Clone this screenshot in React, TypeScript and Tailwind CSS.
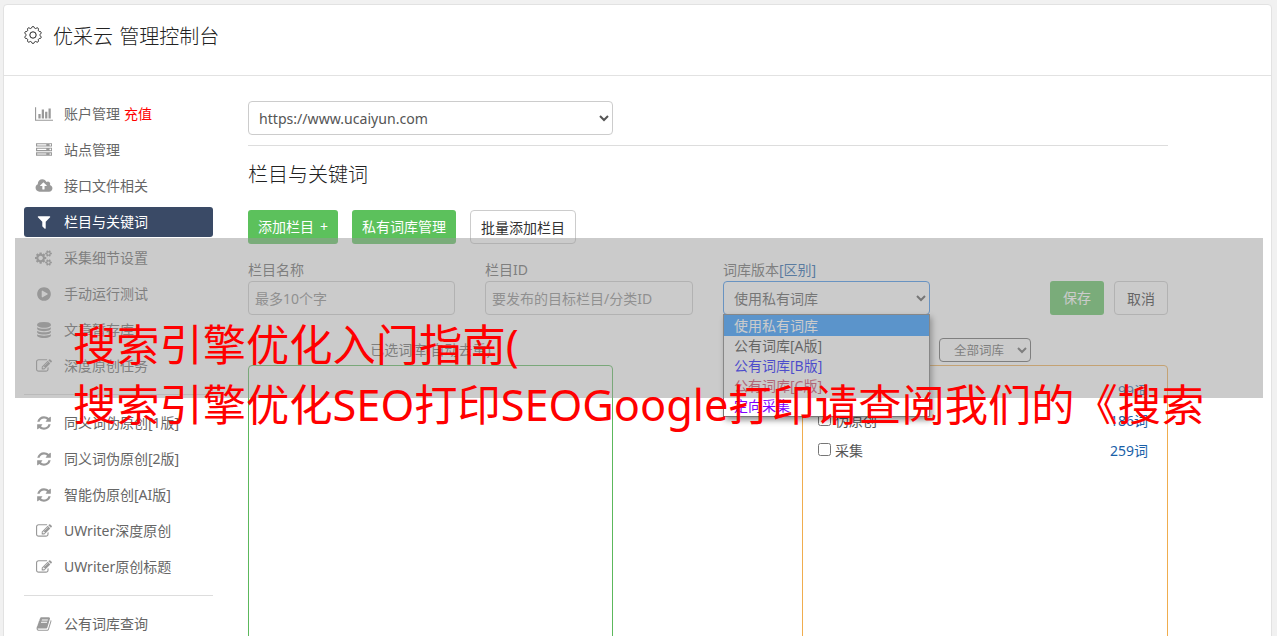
import React from "react";

type IconProps = { d: string; w?: number };

const Icon = ({ d, w = 1792 }: IconProps) => (
  <svg
    viewBox={`0 0 ${w} 1792`}
    className={w > 1792 ? "h-[16px] w-[18px]" : "h-[16px] w-[16px]"}
    fill="currentColor"
  >
    <path d={d} />
  </svg>
);

// outline of a round gear with soft teeth
const gearPoints = Array.from({ length: 120 }, (_, i) => {
  const a = (i / 120) * Math.PI * 2;
  const wave = Math.cos(a * 10);
  const r = 7.7 + 0.8 * Math.sign(wave) * Math.pow(Math.abs(wave), 0.5);
  return `${(9 + r * Math.sin(a)).toFixed(2)},${(9 - r * Math.cos(a)).toFixed(2)}`;
}).join(" ");

const GearIcon = () => (
  <svg
    viewBox="0 0 18 18"
    className="h-[18px] w-[18px]"
    fill="none"
    stroke="currentColor"
    strokeWidth="1"
    strokeLinejoin="round"
  >
    <polygon points={gearPoints} />
    <circle cx="9" cy="9" r="3.2" />
  </svg>
);

const smallCog =
  "v140q0 16-149 31-12 27-30 52 51 113 51 138 0 4-4 7-122 71-124 71-8 0-46-47t-52-68q-20 2-30 2t-30-2q-14 21-52 68t-46 47q-2 0-124-71-4-3-4-7 0-25 51-138-18-25-30-52-149-15-149-31v-140q0-16 149-31 13-29 30-52-51-113-51-138 0-4 4-7 4-2 35-20t59-34 30-16q8 0 46 46.5t52 67.5q20-2 30-2t30 2q51-71 92-112l6-2q4 0 124 70 4 3 4 7 0 25-51 138 17 23 30 52 149 15 149 31z";
const dot = "q0-40-28-68t-68-28-68 28-28 68 28 68 68 28 68-28 28-68z";
const disc =
  "q237 0 443-43t325-127v170q0 69-103 128t-280 93.5-385 34.5-385-34.5-280-93.5-103-128v-170q119 84 325 127t443 43z";

const icons = {
  chart: {
    w: 2048,
    d: "M640 896v512h-256v-512h256zm384-512v1024h-256v-1024h256zm1024 1152v128h-2048v-1536h128v1408h1920zm-640-896v768h-256v-768h256zm384-384v1152h-256v-1152h256z",
  },
  server: {
    d: `M128 1408h1024v-128h-1024v128zM128 896h1024v-128h-1024v128zM1696 1344${dot}M128 384h1024v-128h-1024v128zM1696 832${dot}M1696 320${dot}M1792 1152v384h-1792v-384h1792zM1792 640v384h-1792v-384h1792zM1792 128v384h-1792v-384h1792z`,
  },
  cloud: {
    w: 2048,
    d: "M1344 864q0-14-9-23l-352-352q-9-9-23-9t-23 9l-351 351q-10 12-10 24 0 14 9 23t23 9h224v352q0 13 9.5 22.5t22.5 9.5h192q13 0 22.5-9.5t9.5-22.5v-352h224q13 0 22.5-9.5t9.5-22.5zm640 288q0 159-112.5 271.5t-271.5 112.5h-1088q-185 0-316.5-131.5t-131.5-316.5q0-130 70-240t188-165q-2-30-2-43 0-212 150-362t362-150q156 0 285.5 87t188.5 231q71-62 166-62 106 0 181 75t75 181q0 76-41 138 130 31 213.5 135.5t83.5 238.5z",
  },
  filter: {
    d: "M1595 295q17 41-14 70l-493 493v742q0 42-39 59-13 5-25 5-27 0-45-19l-256-256q-19-19-19-45v-486l-493-493q-31-29-14-70 17-39 59-39h1280q42 0 59 39z",
  },
  cogs: {
    w: 2048,
    d: `M896 896q0-106-75-181t-181-75-181 75-75 181 75 181 181 75 181-75 75-181zm768 512q0-52-38-90t-90-38-90 38-38 90q0 53 37.5 90.5t90.5 37.5 90.5-37.5 37.5-90.5zm0-1024q0-52-38-90t-90-38-90 38-38 90q0 53 37.5 90.5t90.5 37.5 90.5-37.5 37.5-90.5zm-384 421v185q0 10-7 19.5t-16 10.5l-155 24q-11 35-32 76 34 48 90 115 7 11 7 20 0 12-7 19-23 30-82.5 89.5t-78.5 59.5q-11 0-21-7l-115-90q-37 19-77 31-11 108-23 155-7 24-30 24h-186q-11 0-20-7.5t-10-17.5l-23-153q-34-10-75-31l-118 89q-7 7-20 7-11 0-21-8-144-133-144-160 0-9 7-19 10-14 41-53t47-61q-23-44-35-82l-152-24q-10-1-17-9.5t-7-19.5v-185q0-10 7-19.5t16-10.5l155-24q11-35 32-76-34-48-90-115-7-11-7-20 0-12 7-20 22-30 82-89t79-59q11 0 21 7l115 90q34-18 77-32 11-108 23-154 7-24 30-24h186q11 0 20 7.5t10 17.5l23 153q34 10 75 31l118-89q8-7 20-7 11 0 21 8 144 133 144 160 0 8-7 19-12 16-42 54t-45 60q23 48 34 82l152 23q10 2 17 10.5t7 19.5zM1920 1338${smallCog}M1920 314${smallCog}`,
  },
  play: {
    d: "M896 128q209 0 385.5 103t279.5 279.5 103 385.5-103 385.5-279.5 279.5-385.5 103-385.5-103-279.5-279.5-103-385.5 103-385.5 279.5-279.5 385.5-103zm384 823q32-18 32-55t-32-55l-544-320q-31-19-64-1-32 19-32 55v640q0 37 32 55 16 8 32 8 17 0 32-9z",
  },
  database: {
    d: `M896 768${disc}M896 1536${disc}M896 1152${disc}M896 0q208 0 385 34.5t280 93.5 103 128v128q0 69-103 128t-280 93.5-385 34.5-385-34.5-280-93.5-103-128v-128q0-69 103-128t280-93.5 385-34.5z`,
  },
  edit: {
    d: "M888 1184l116-116-152-152-116 116v56h96v96h56zm440-720q-16-16-33 1l-350 350q-17 17-1 33t33-1l350-350q17-17 1-33zm80 594v190q0 119-84.5 203.5t-203.5 84.5h-832q-119 0-203.5-84.5t-84.5-203.5v-832q0-119 84.5-203.5t203.5-84.5h832q63 0 117 25 15 7 18 23 3 17-9 29l-49 49q-14 14-32 8-23-6-45-6h-832q-66 0-113 47t-47 113v832q0 66 47 113t113 47h832q66 0 113-47t47-113v-126q0-13 9-22l64-64q15-15 35-7t20 29zm-96-738l288 288-672 672h-288v-288zm444 132l-92 92-288-288 92-92q28-28 68-28t68 28l152 152q28 28 28 68t-28 68z",
  },
  refresh: {
    d: "M1639 1056q0 5-1 7-64 268-268 434.5t-478 166.5q-146 0-282.5-55t-243.5-157l-129 129q-19 19-45 19t-45-19-19-45v-448q0-26 19-45t45-19h448q26 0 45 19t19 45-19 45l-137 137q71 66 161 102t187 36q134 0 250-65t186-179q11-17 53-117 8-23 30-23h192q13 0 22.5 9.5t9.5 22.5zm25-800v448q0 26-19 45t-45 19h-448q-26 0-45-19t-19-45 19-45l138-138q-148-137-349-137-134 0-250 65t-186 179q-11 17-53 117-8 23-30 23h-199q-13 0-22.5-9.5t-9.5-22.5v-7q65-268 270-434.5t480-166.5q146 0 284 55.5t245 156.5l130-129q19-19 45-19t45 19 19 45z",
  },
  book: {
    d: "M1703 478q40 57 18 129l-275 906q-19 64-76.5 107.5t-122.5 43.5h-923q-77 0-148.5-53.5t-99.5-131.5q-24-67-2-127 0-4 3-27t4-37q1-8-3-21.5t-3-19.5q2-11 8-21t16.5-23.5 16.5-23.5q23-38 45-91.5t30-91.5q3-10 .5-30t-.5-28q3-11 17-28t17-23q21-36 42-92t25-90q1-9-2.5-32t.5-28q4-13 22-30.5t22-22.5q19-26 42.5-84.5t27.5-96.5q1-8-3-25.5t-2-26.5q2-8 9-18t18-23 17-21q8-12 16.5-30.5t15-35 16-36 19.5-32 26.5-23.5 36-11.5 47.5 5.5l-1 3q38-9 51-9h761q74 0 114 56t18 130l-274 906q-36 119-71.5 153.5t-128.5 34.5h-869q-27 0-38 15-11 16-1 43 24 70 144 70h923q29 0 56-15.5t35-41.5l300-987q7-22 5-57 38 15 59 43zm-1064 2q-4 13 2 22.5t20 9.5h608q13 0 25.5-9.5t16.5-22.5l21-64q4-13-2-22.5t-20-9.5h-608q-13 0-25.5 9.5t-16.5 22.5zm-83 256q-4 13 2 22.5t20 9.5h608q13 0 25.5-9.5t16.5-22.5l21-64q4-13-2-22.5t-20-9.5h-608q-13 0-25.5 9.5t-16.5 22.5z",
  },
};

type MenuItem = {
  icon: IconProps;
  label: string;
  extra?: string;
  active?: boolean;
};

const menuGroups: MenuItem[][] = [
  [
    { icon: icons.chart, label: "账户管理", extra: "充值" },
    { icon: icons.server, label: "站点管理" },
    { icon: icons.cloud, label: "接口文件相关" },
    { icon: icons.filter, label: "栏目与关键词", active: true },
    { icon: icons.cogs, label: "采集细节设置" },
    { icon: icons.play, label: "手动运行测试" },
    { icon: icons.database, label: "文章暂存库" },
    { icon: icons.edit, label: "深度原创任务" },
  ],
  [
    { icon: icons.refresh, label: "同义词伪原创[1版]" },
    { icon: icons.refresh, label: "同义词伪原创[2版]" },
    { icon: icons.refresh, label: "智能伪原创[AI版]" },
    { icon: icons.edit, label: "UWriter深度原创" },
    { icon: icons.edit, label: "UWriter原创标题" },
  ],
  [{ icon: icons.book, label: "公有词库查询" }],
];

const options = [
  { label: "使用私有词库", className: "bg-[#1e90ff] text-white" },
  { label: "公有词库[A版]", className: "text-[#333]" },
  { label: "公有词库[B版]", className: "text-[#0000ff]" },
  { label: "公有词库[C版]", className: "text-[#c8385a]" },
  { label: "定向采集", className: "text-[#8000ff]" },
];

const words = [
  { label: "优化", count: "99词" },
  { label: "伪原创", count: "186词" },
  { label: "采集", count: "259词" },
];

const Sidebar = () => (
  <nav className="w-[189px] shrink-0 pt-[23px]">
    {menuGroups.map((group, i) => (
      <div
        key={i}
        className={i > 0 ? "mt-[13px] border-t border-[#ddd] pt-[13px]" : ""}
      >
        <div className="flex flex-col gap-[6px]">
          {group.map((item) => (
            <div
              key={item.label}
              className={
                item.active
                  ? "flex h-[30px] items-center rounded-[3px] bg-[#3a4a66] text-white"
                  : "flex h-[30px] items-center text-[#666]"
              }
            >
              <span
                className={
                  item.active
                    ? "flex w-10 justify-center"
                    : "flex w-10 justify-center text-[#999]"
                }
              >
                <Icon {...item.icon} />
              </span>
              <span className="pb-[2px]">{item.label}</span>
              {item.extra && (
                <span className="ml-1 pb-[2px] text-[#ff0000]">
                  {item.extra}
                </span>
              )}
            </div>
          ))}
        </div>
      </div>
    ))}
  </nav>
);

const VersionSelect = () => (
  <div className="relative w-[207px]">
    <select className="h-[34px] w-full rounded-[4px] border border-[#3a8eea] bg-white px-[6px] text-[#555]">
      <option>使用私有词库</option>
    </select>
    <div className="absolute top-[33px] left-0 z-10 w-full border border-[#777] bg-white shadow-[2px_3px_6px_rgba(0,0,0,0.45)]">
      {options.map((o) => (
        <div
          key={o.label}
          className={`h-5 pl-[10px] leading-5 first:h-[21px] first:leading-[22px] ${o.className}`}
        >
          {o.label}
        </div>
      ))}
    </div>
  </div>
);

const Content = () => (
  <main className="w-[920px] pt-[25px]">
    <select className="h-[34px] w-[365px] rounded-[4px] border border-[#ccc] bg-white px-[6px] text-[14.1px] text-[#555]">
      <option>https://www.ucaiyun.com</option>
    </select>
    <div className="mt-[10px] border-t border-[#ddd]" />
    <h2 className="mt-[14px] text-[20px] leading-[30px] font-light text-[#222]">
      栏目与关键词
    </h2>
    <div className="mt-[20px] flex h-[34px]">
      <button className="flex w-[90px] items-center justify-center gap-[6px] rounded-[3px] bg-[#5cc15c] pb-[2px] text-white">
        添加栏目 <span>+</span>
      </button>
      <button className="ml-[14px] w-[104px] rounded-[3px] bg-[#5cc15c] pb-[2px] text-white">
        私有词库管理
      </button>
      <button className="ml-[14px] w-[106px] rounded-[4px] border border-[#ccc] bg-white text-[#333]">
        批量添加栏目
      </button>
    </div>
    <div className="mt-[15px] flex items-end text-[#666]">
      <div className="w-[207px]">
        <p className="h-[22px] leading-[22px]">栏目名称</p>
        <input
          placeholder="最多10个字"
          className="h-[34px] w-full rounded-[4px] border border-[#ccc] px-[6px] placeholder:text-[#888]"
        />
      </div>
      <div className="ml-[30px] w-[208px]">
        <p className="h-[22px] leading-[22px]">栏目ID</p>
        <input
          placeholder="要发布的目标栏目/分类ID"
          className="h-[34px] w-full rounded-[4px] border border-[#ccc] px-[6px] placeholder:text-[#888]"
        />
      </div>
      <div className="ml-[30px]">
        <p className="h-[22px] leading-[22px]">
          词库版本<span className="text-[#1a5fa8]">[区别]</span>
        </p>
        <VersionSelect />
      </div>
      <button className="ml-auto h-[34px] w-[54px] rounded-[3px] bg-[#5cc15c] pb-[2px] text-white">
        保存
      </button>
      <button className="ml-[10px] h-[34px] w-[54px] rounded-[4px] border border-[#ccc] bg-white text-[#333]">
        取消
      </button>
    </div>
    <div className="mt-[23px] flex justify-between">
      <div className="w-[365px]">
        <p className="h-[27px] text-center leading-6 text-[#666]">
          已选词库(自动去重)
        </p>
        <div className="h-[320px] rounded-[4px] border border-[#5cb85c]" />
      </div>
      <div className="w-[366px]">
        <div className="flex h-[27px] justify-end pr-[137px]">
          <select className="h-6 w-[92px] rounded-[4px] border border-[#666] bg-white pl-[10px] text-[12.5px] text-[#666]">
            <option>全部词库</option>
          </select>
        </div>
        <div className="h-[320px] rounded-[4px] border border-[#f0ad4e] pt-[9px] pr-[19px] pl-[15px]">
          {words.map((w) => (
            <div key={w.label} className="flex h-[30px] items-center">
              <input
                type="checkbox"
                className="mr-1 mb-[2px] h-[13px] w-[13px]"
              />
              <span className="text-[#555]">{w.label}</span>
              <span className="ml-auto text-[#1a5fa8]">{w.count}</span>
            </div>
          ))}
        </div>
      </div>
    </div>
  </main>
);

const Banner = () => (
  <div className="absolute top-[238px] left-[15px] z-20 h-[160px] w-[1248px] bg-[#979797]/50 pt-[77px] pl-[58px] text-[43.27px] leading-[60px] whitespace-nowrap text-[#ff0000]">
    <p>搜索引擎优化入门指南(</p>
    <p>搜索引擎优化SEO打印SEOGoogle打印请查阅我们的《搜索</p>
  </div>
);

const App = () => {
  return (
    <div className="relative h-[636px] w-[1277px] overflow-hidden bg-[#f1f1f1] pt-1 pl-[3px] font-['Noto_Sans','Noto_Sans_CJK_SC',sans-serif] text-[14px]">
      <div className="h-[660px] w-[1269px] rounded-[4px] border border-[#e2e2e2] bg-white">
        <header className="flex h-[71px] items-center gap-[11px] border-b border-[#e2e2e2] pb-[6px] pl-5 text-[20px] text-[#222]">
          <div className="pb-[4px]">
            <GearIcon />
          </div>
          <h1 className="font-light [word-spacing:1px]">优采云 管理控制台</h1>
        </header>
        <div className="flex gap-[35px] pl-5">
          <Sidebar />
          <Content />
        </div>
      </div>
      <Banner />
    </div>
  );
};

export default App;
